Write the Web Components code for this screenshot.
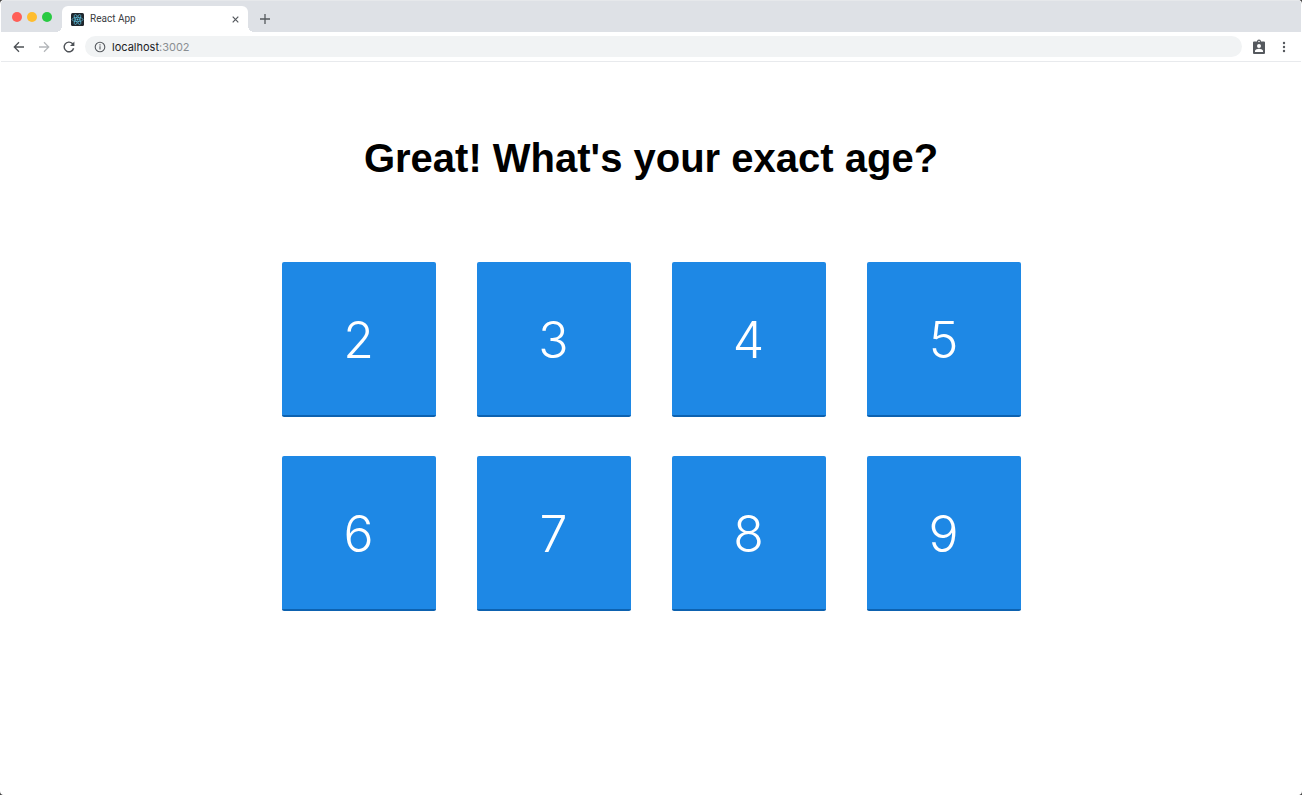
<!DOCTYPE html>
<html lang="en">
<head>
<meta charset="UTF-8">
<meta name="viewport" content="width=device-width, initial-scale=1">
<title>React App</title>
<style>
    body {
        margin: 0;
        background: #fff;
        font-family: Inter, "Liberation Sans", sans-serif;
    }
</style>
</head>
<body>
<browser-window>
    <browser-tab slot="tabs">React App</browser-tab>
    <address-bar slot="toolbar" host="localhost" port="3002"></address-bar>
    <age-picker>
        <span slot="question">Great! What's your exact age?</span>
        <age-tile value="2"></age-tile>
        <age-tile value="3"></age-tile>
        <age-tile value="4"></age-tile>
        <age-tile value="5"></age-tile>
        <age-tile value="6"></age-tile>
        <age-tile value="7"></age-tile>
        <age-tile value="8"></age-tile>
        <age-tile value="9"></age-tile>
    </age-picker>
</browser-window>

<script>
class BrowserWindow extends HTMLElement {
    constructor() {
        super();
        this.attachShadow({ mode: "open" });

        this.shadowRoot.innerHTML = `
            <style>
                :host {
                    display: block;
                    box-sizing: border-box;
                    min-height: 100vh;
                    background: #444;
                }
                .window {
                    box-sizing: border-box;
                    min-height: 100vh;
                    margin: 0 1px;
                    background: #fff;
                    border-radius: 4px;
                    overflow: hidden;
                    box-shadow: -1px 0 #fff, 1px 0 #fff;
                }
                .strip {
                    display: flex;
                    align-items: flex-end;
                    box-sizing: border-box;
                    height: 32px;
                    padding-left: 11px;
                    background: #dee1e6;
                    border-top: 1px solid #e6e8eb;
                }
                .lights {
                    display: flex;
                    gap: 5px;
                    width: 50px;
                    padding-bottom: 10px;
                }
                .lights i {
                    width: 10px;
                    height: 10px;
                    border-radius: 50%;
                    background: #ff5f57;
                }
                .lights i:nth-child(2) { background: #ffbd2e; }
                .lights i:nth-child(3) { background: #28ca42; }
                button {
                    display: flex;
                    margin: 0;
                    padding: 0;
                    border: 0;
                    background: none;
                }
                .new-tab { padding: 0 0 7px 11px; }
            </style>

            <div class="window">
                <div class="strip">
                    <div class="lights"><i></i><i></i><i></i></div>
                    <slot name="tabs"></slot>
                    <button class="new-tab" aria-label="New tab">
                        <svg width="12" height="12" viewBox="0 0 12 12" stroke="#55595e" stroke-width="1.3"><path d="M6 1v10M1 6h10"/></svg>
                    </button>
                </div>
                <slot name="toolbar"></slot>
                <slot></slot>
            </div>
        `;
    }
}

class BrowserTab extends HTMLElement {
    constructor() {
        super();
        this.attachShadow({ mode: "open" });

        this.shadowRoot.innerHTML = `
            <style>
                :host {
                    display: flex;
                    align-items: center;
                    position: relative;
                    box-sizing: border-box;
                    width: 186px;
                    height: 26px;
                    padding: 0 7px 0 9px;
                    gap: 6px;
                    background: #fff;
                    border-radius: 6px 6px 0 0;
                    font-family: Roboto, "Liberation Sans", sans-serif;
                    font-size: 10px;
                    line-height: 14px;
                    color: #3c4043;
                }
                /* flared feet where the tab meets the toolbar */
                :host::before,
                :host::after {
                    content: "";
                    position: absolute;
                    bottom: 0;
                    width: 6px;
                    height: 6px;
                }
                :host::before {
                    left: -6px;
                    background: radial-gradient(circle at 0 0, transparent 6px, #fff 6px);
                }
                :host::after {
                    right: -6px;
                    background: radial-gradient(circle at 100% 0, transparent 6px, #fff 6px);
                }
                .title { flex: 1; }
                svg { display: block; }
                button {
                    margin: 0;
                    padding: 0;
                    border: 0;
                    background: none;
                }
            </style>

            <svg width="13" height="13" viewBox="0 0 26 26">
                <rect width="26" height="26" rx="3" fill="#20262c"/>
                <g fill="none" stroke="#61c9e8" stroke-width="1.3">
                    <ellipse cx="13" cy="13" rx="11" ry="4.2"/>
                    <ellipse cx="13" cy="13" rx="11" ry="4.2" transform="rotate(60 13 13)"/>
                    <ellipse cx="13" cy="13" rx="11" ry="4.2" transform="rotate(120 13 13)"/>
                </g>
                <circle cx="13" cy="13" r="2" fill="#61c9e8"/>
            </svg>
            <span class="title"><slot></slot></span>
            <button aria-label="Close tab">
                <svg width="11" height="11" viewBox="0 0 11 11" stroke="#55595e" stroke-width="1.2"><path d="M2.700 2.700l5.600 5.600M8.300 2.700l-5.600 5.600"/></svg>
            </button>
        `;
    }
}

class AddressBar extends HTMLElement {
    constructor() {
        super();
        this.attachShadow({ mode: "open" });

        const host = this.getAttribute("host") || "localhost";
        const port = this.getAttribute("port") || "3000";

        this.shadowRoot.innerHTML = `
            <style>
                :host {
                    display: flex;
                    align-items: center;
                    box-sizing: border-box;
                    height: 30px;
                    padding: 0 10px 0 11px;
                    border-bottom: 1px solid #e8eaed;
                }
                button {
                    display: flex;
                    margin: 0;
                    padding: 0;
                    border: 0;
                    background: none;
                }
                svg { display: block; }
                .nav {
                    display: flex;
                    gap: 11px;
                }
                .url {
                    display: flex;
                    flex: 1;
                    align-items: center;
                    gap: 6px;
                    height: 21px;
                    margin: 0 10px 0 9px;
                    padding-left: 9px;
                    border-radius: 11px;
                    background: #f1f3f4;
                    font-size: 11px;
                    line-height: 14px;
                    color: #202124;
                }
                .url span span { color: #8a8e92; }
                .actions {
                    display: flex;
                    gap: 11px;
                }
            </style>

            <div class="nav">
                <button aria-label="Back">
                    <svg width="14" height="14" viewBox="0 0 14 14" fill="none" stroke="#4d5156" stroke-width="1.3"><path d="M12 7H2.5M7 2.3L2.3 7L7 11.7"/></svg>
                </button>
                <button aria-label="Forward">
                    <svg width="14" height="14" viewBox="0 0 14 14" fill="none" stroke="#b4b7ba" stroke-width="1.3"><path d="M2 7h9.5M7 2.3L11.7 7L7 11.7"/></svg>
                </button>
                <button aria-label="Reload">
                    <svg width="14" height="14" viewBox="0 0 14 14" fill="none" stroke="#4d5156" stroke-width="1.4"><path d="M11.6 8.2A4.8 4.8 0 1 1 10.4 3.6L11.6 4.8"/><path d="M12.4 1.6v4.4H8z" fill="#4d5156" stroke="none"/></svg>
                </button>
            </div>
            <div class="url">
                <svg width="12" height="12" viewBox="0 0 12 12" fill="none" stroke="#55595e" stroke-width="1.1"><circle cx="6" cy="6" r="4.8"/><path d="M6 5.3v3.2M6 3.3v1.2"/></svg>
                <span>${host}<span>:${port}</span></span>
            </div>
            <div class="actions">
                <button aria-label="Profile">
                    <svg width="14" height="16" viewBox="0 0 14 16"><path fill="#55595e" fill-rule="evenodd" d="M2 2.5h3a2 2 0 0 1 4 0h3a1 1 0 0 1 1 1V14a1 1 0 0 1-1 1H2a1 1 0 0 1-1-1V3.5a1 1 0 0 1 1-1zM7 1.7a.8.8 0 1 0 0 1.6a.8.8 0 0 0 0-1.6zM7 5a2 2 0 1 0 0 4a2 2 0 0 0 0-4zM3 13h8v-1.2c0-1.3-2.7-2-4-2s-4 .7-4 2z"/></svg>
                </button>
                <button aria-label="Menu">
                    <svg width="14" height="16" viewBox="0 0 14 16" fill="#55595e"><circle cx="7" cy="4" r="1.2"/><circle cx="7" cy="8" r="1.2"/><circle cx="7" cy="12" r="1.2"/></svg>
                </button>
            </div>
        `;
    }
}

class AgePicker extends HTMLElement {
    constructor() {
        super();
        this.attachShadow({ mode: "open" });

        this.shadowRoot.innerHTML = `
            <style>
                :host {
                    display: block;
                    padding: 72px 20px 40px;
                }
                h1 {
                    margin: 0 0 80px;
                    font-family: "Liberation Sans", Arial, sans-serif;
                    font-size: 40px;
                    line-height: 48px;
                    font-weight: 700;
                    text-align: center;
                    color: #000;
                }
                .grid {
                    display: grid;
                    grid-template-columns: repeat(auto-fit, 154px);
                    justify-content: center;
                    gap: 39px 41px;
                    max-width: 740px;
                    margin: auto;
                }
            </style>

            <h1><slot name="question"></slot></h1>
            <div class="grid"><slot></slot></div>
        `;
    }
}

class AgeTile extends HTMLElement {
    constructor() {
        super();
        this.attachShadow({ mode: "open" });

        this.shadowRoot.innerHTML = `
            <style>
                :host {
                    display: block;
                }
                button {
                    display: block;
                    box-sizing: border-box;
                    width: 100%;
                    height: 155px;
                    margin: 0;
                    padding: 2px 0 0;
                    border: 0;
                    border-bottom: 2px solid #0d62b0;
                    border-radius: 2px;
                    background: #1e88e5;
                    color: #fff;
                    font-family: Inter, "Liberation Sans", sans-serif;
                    font-size: 50px;
                    line-height: 60px;
                    font-weight: 300;
                }
            </style>

            <button>${this.getAttribute("value")}</button>
        `;
    }
}

customElements.define("browser-window", BrowserWindow);
customElements.define("browser-tab", BrowserTab);
customElements.define("address-bar", AddressBar);
customElements.define("age-picker", AgePicker);
customElements.define("age-tile", AgeTile);
</script>
</body>
</html>
